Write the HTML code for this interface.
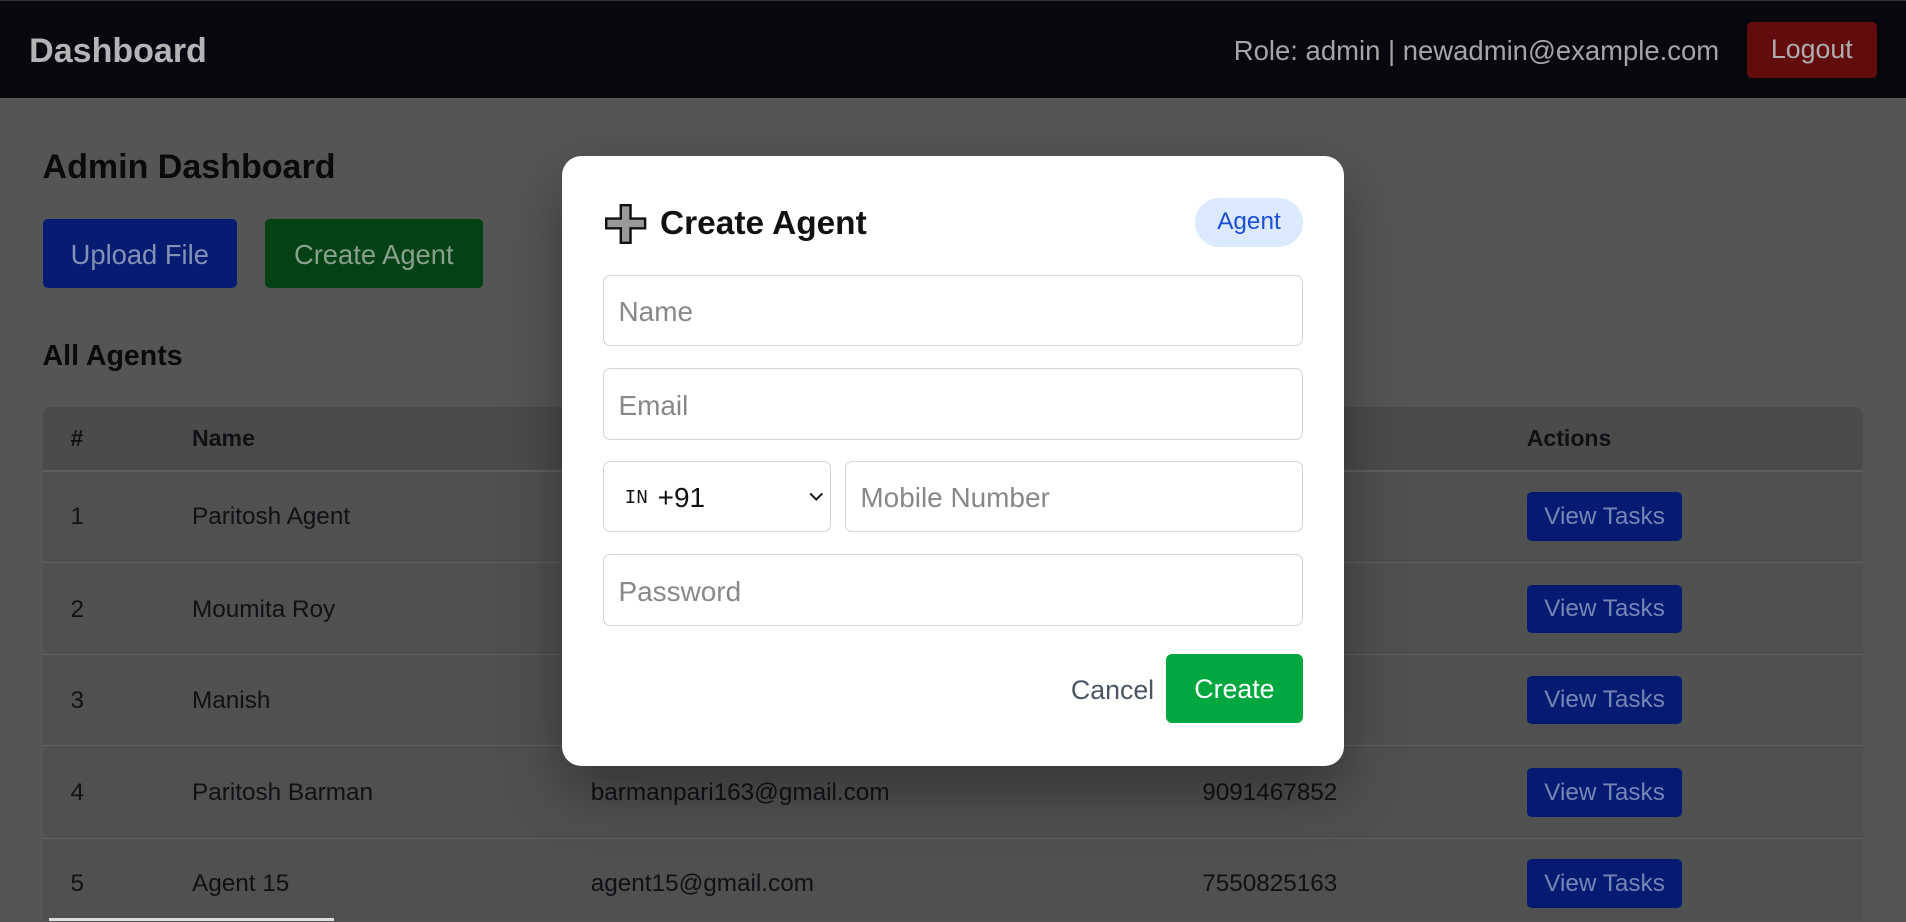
<!DOCTYPE html>
<html><head><meta charset="utf-8"><style>
html{zoom:1.21556}
*{box-sizing:border-box;margin:0;padding:0}
body{width:1568px;height:758px;overflow:hidden;background:#555;font-family:"Liberation Sans",sans-serif;position:relative;color:#0a0a0a}
.a{position:absolute;white-space:nowrap}
.nav{left:0;top:0;width:1568px;height:81px;background:#06080d;border-top:1px solid #333}
.btn{position:absolute;border-radius:4px;display:flex;align-items:center;justify-content:center}
.t{position:absolute;font-size:20px;color:#0f1115}
.h{font-weight:bold;font-size:19px}
.row{position:absolute;left:35px;width:1498px;height:1px;background:#606060}
.vt{position:absolute;left:1256px;width:128px;height:40px;background:#041b71;border-radius:4px;color:#7685b6;font-size:20px;display:flex;align-items:center;justify-content:center}
.modal{left:462px;top:128px;width:644px;height:502px;background:#fff;border-radius:16px;box-shadow:0 20px 50px rgba(0,0,0,.35)}
.inp{position:absolute;border:1px solid #d4d4d4;border-radius:6px;height:59px;font-size:23px;color:#888;display:flex;align-items:center;padding-left:12px;padding-top:3px;background:#fff}
</style></head><body>
<div class="a nav"></div>
<div class="a" style="left:24px;top:26px;font-size:28px;font-weight:bold;color:#b4b4b4">Dashboard</div>
<div class="a" style="left:1015px;top:29px;font-size:22.6px;color:#a5a5a5">Role: admin | newadmin@example.com</div>
<div class="btn" style="left:1437px;top:18px;width:107px;height:46px;background:#620c0e;color:#aeaeae;font-size:22px">Logout</div>

<div class="a" style="left:35px;top:122px;font-size:28px;font-weight:bold">Admin Dashboard</div>
<div class="btn" style="left:35px;top:180px;width:160px;height:57px;background:#061c71;color:#8490b6;font-size:22.5px;padding-top:3px">Upload File</div>
<div class="btn" style="left:218px;top:180px;width:179px;height:57px;background:#044114;color:#88a08e;font-size:22.5px;padding-top:3px">Create Agent</div>
<div class="a" style="left:35px;top:280px;font-size:23.5px;font-weight:bold">All Agents</div>

<div class="a" style="left:35px;top:335px;width:1498px;height:423px;background:#505050;border-radius:6px 6px 0 0"></div>
<div class="a" style="left:35px;top:335px;width:1498px;height:52px;background:#4b4b4b;border-radius:6px 6px 0 0"></div>
<div class="t h" style="left:58px;top:350px">#</div>
<div class="t h" style="left:158px;top:350px">Name</div>
<div class="t h" style="left:1256px;top:350px">Actions</div>
<div class="row" style="top:387px"></div>
<div class="row" style="top:462px"></div>
<div class="row" style="top:538px"></div>
<div class="row" style="top:613px"></div>
<div class="row" style="top:689px"></div>

<div class="t" style="left:58px;top:414px">1</div><div class="t" style="left:158px;top:414px">Paritosh Agent</div><div class="vt" style="top:405px">View Tasks</div>
<div class="t" style="left:58px;top:490px">2</div><div class="t" style="left:158px;top:490px">Moumita Roy</div><div class="vt" style="top:481px">View Tasks</div>
<div class="t" style="left:58px;top:565px">3</div><div class="t" style="left:158px;top:565px">Manish</div><div class="vt" style="top:556px">View Tasks</div>
<div class="t" style="left:58px;top:641px">4</div><div class="t" style="left:158px;top:641px">Paritosh Barman</div><div class="t" style="left:486px;top:641px">barmanpari163@gmail.com</div><div class="t" style="left:989px;top:641px">9091467852</div><div class="vt" style="top:632px">View Tasks</div>
<div class="t" style="left:58px;top:716px">5</div><div class="t" style="left:158px;top:716px">Agent 15</div><div class="t" style="left:486px;top:716px">agent15@gmail.com</div><div class="t" style="left:989px;top:716px">7550825163</div><div class="vt" style="top:707px">View Tasks</div>
<div class="a" style="left:40px;top:755px;width:235px;height:3px;background:#ddd"></div>

<div class="a modal"></div>
<svg class="a" style="left:498px;top:168px" width="35" height="33" viewBox="0 0 35 33"><path d="M13 1H21V12H33V20H21V32H13V20H1V12H13Z" fill="#999" stroke="#111" stroke-width="2"/></svg>
<div class="a" style="left:543px;top:169px;font-size:27.5px;font-weight:bold;color:#111">Create Agent</div>
<div class="btn" style="left:983px;top:163px;width:89px;height:40px;border-radius:20px;background:#dbeafe;color:#1d4ed8;font-size:20px">Agent</div>
<div class="inp" style="left:496px;top:226px;width:576px">Name</div>
<div class="inp" style="left:496px;top:303px;width:576px">Email</div>
<div class="inp" style="left:496px;top:379px;width:188px;color:#111;padding-left:17px"><span style="font-family:'Liberation Mono',monospace;font-size:16px;margin-right:8px">IN</span>+91
<svg style="position:absolute;right:6px;top:24px" width="12" height="9" viewBox="0 0 12 9"><path d="M1 2L6 7L11 2" fill="none" stroke="#111" stroke-width="1.6"/></svg></div>
<div class="inp" style="left:695px;top:379px;width:377px">Mobile Number</div>
<div class="inp" style="left:496px;top:456px;width:576px">Password</div>
<div class="a" style="left:881px;top:555px;font-size:22px;color:#4b5563">Cancel</div>
<div class="btn" style="left:959px;top:538px;width:113px;height:57px;background:#00a83f;color:#fff;font-size:22px;border-radius:5px;padding-top:2px">Create</div>
</body></html>
